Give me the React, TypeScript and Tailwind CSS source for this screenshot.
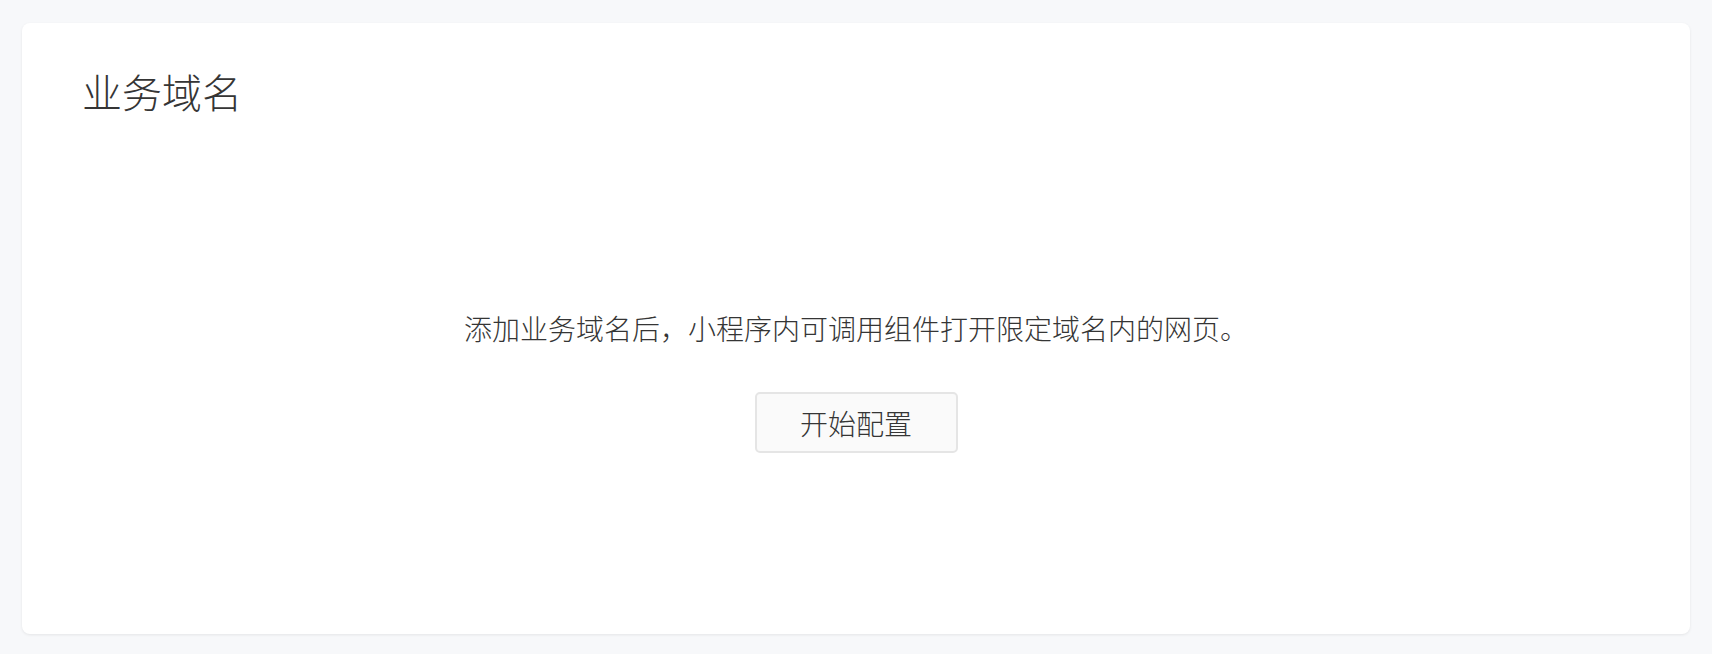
export default function App() {
  return (
    <div
      className="min-h-[654px] bg-[#f7f8fa] pt-[23px] pb-[20px] px-[22px]"
      style={{ fontFamily: '"Noto Sans CJK SC", "Noto Sans", sans-serif' }}
    >
      <div className="h-[611px] rounded-[8px] bg-white shadow-[0_1px_3px_rgba(0,0,0,0.08)] px-[60px] pt-[48px]">
        <h1 className="text-[40px] leading-[40px] font-light text-[#353535]">业务域名</h1>

        <div className="mt-[197px] flex flex-col items-center">
          <p className="text-[28px] leading-[40px] font-light text-[#353535]">
            添加业务域名后，小程序内可调用组件打开限定域名内的网页。
          </p>
          <button
            type="button"
            className="mt-[44px] h-[61px] w-[203px] rounded-[5px] border-2 border-[#e5e5e5] bg-[#fafafa] text-[28px] font-light text-[#353535]"
          >
            开始配置
          </button>
        </div>
      </div>
    </div>
  )
}
